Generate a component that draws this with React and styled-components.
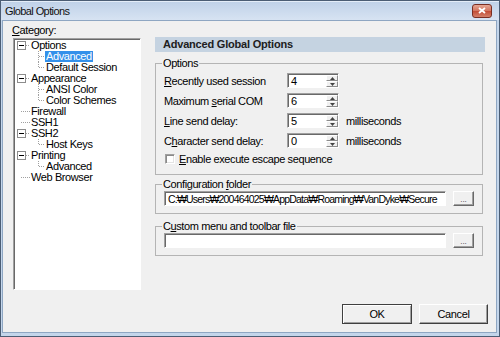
import React from "react";
import styled, { createGlobalStyle } from "styled-components";

const GlobalStyle = createGlobalStyle`
  html, body {
    margin: 0;
    padding: 0;
    background: #ffffff;
  }
  body {
    font-family: "Liberation Sans", Arial, sans-serif;
  }
`;

const Window = styled.div`
  width: 500px;
  height: 337px;
  box-sizing: border-box;
  border: 1px solid #4b5d74;
  display: flex;
  flex-direction: column;
  background: #c4d6eb;
  font-family: "Liberation Sans", "Noto Sans CJK KR", Arial, sans-serif;
  font-size: 11px;
  letter-spacing: -0.4px;
  color: #000;
`;

const TitleBar = styled.div`
  height: 19px;
  flex: none;
  display: flex;
  align-items: center;
  padding: 0 7px 0 4px;
  background: linear-gradient(#bfd1e8, #d7e3f2);
  box-shadow: inset 0 1px #e4edf8;
`;

const Title = styled.span`
  flex: 1;
  font-size: 11px;
  letter-spacing: -0.6px;
  color: #111;
`;

const CloseButton = styled.div`
  width: 20px;
  height: 14px;
  box-sizing: border-box;
  border: 1px solid #7a2e22;
  border-radius: 3px;
  background: linear-gradient(#e7a693, #d27560 48%, #c24c35 52%, #d4806a);
  display: flex;
  align-items: center;
  justify-content: center;
`;

const Frame = styled.div`
  flex: 1;
  display: flex;
  padding: 0 3px 3px 1px;
  min-height: 0;
`;

const Client = styled.div`
  flex: 1;
  display: flex;
  flex-direction: column;
  background: #f0f0f0;
  border: 1px solid #8ea6c2;
  padding: 4px 8px 8px 9px;
  min-height: 0;
`;

const Body = styled.div`
  flex: 1;
  display: flex;
  gap: 14px;
  min-height: 0;
`;

const LeftCol = styled.div`
  width: 129px;
  flex: none;
  display: flex;
  flex-direction: column;
`;

const Caption = styled.div`
  line-height: 11px;
  height: 11px;
`;

const Key = styled.span`
  text-decoration: underline;
`;

const Tree = styled.div`
  margin: 2px 0 0 1px;
  width: 128px;
  height: 252px;
  box-sizing: border-box;
  background: #fff;
  border: 1px solid;
  border-color: #a0a0a0 #ffffff #ffffff #a0a0a0;
  box-shadow: inset 1px 1px #696969;
  padding: 1px 0 0 2px;
`;

const TreeRow = styled.div`
  height: 11px;
  display: flex;
  align-items: center;
  padding-left: ${(p) => (p.$child ? 21 : 1)}px;
`;

const TreeLabel = styled.span`
  line-height: 11px;
  padding: 0 1px;
  white-space: nowrap;
  background: ${(p) => (p.$selected ? "#3390ea" : "transparent")};
  color: ${(p) => (p.$selected ? "#fff" : "#000")};
`;

const RightCol = styled.div`
  flex: 1;
  display: flex;
  flex-direction: column;
  margin: 12px 3px 0 0;
`;

const PanelHeader = styled.div`
  height: 15px;
  line-height: 15px;
  background: #c5d3e1;
  font-weight: bold;
  letter-spacing: -0.2px;
  padding-left: 8px;
  color: #202020;
`;

const Group = styled.fieldset`
  margin: ${(p) => p.$top}px 2px 0 0;
  padding: ${(p) => p.$pad};
  border: 1px solid #b4b4b4;
  min-width: 0;
`;

const Legend = styled.legend`
  padding: 0 1px;
  margin-left: -2px;
  line-height: 13px;
`;

const FormGrid = styled.div`
  display: grid;
  grid-template-columns: 123px 52px auto;
  grid-auto-rows: 15px;
  row-gap: 5px;
  align-items: center;
`;

const Unit = styled.span`
  padding-left: 7px;
`;

const CheckRow = styled.label`
  grid-column: 1 / -1;
  height: 12px;
  display: flex;
  align-items: center;
  gap: 4px;
  padding-left: 1px;
  margin-top: -3px;
`;

const CheckBox = styled.span`
  width: 10px;
  height: 10px;
  box-sizing: border-box;
  background: #fff;
  border: 1px solid;
  border-color: #a0a0a0 #ffffff #ffffff #a0a0a0;
  box-shadow: inset 1px 1px #8a8a8a, inset -1px -1px #e3e3e3;
`;

const Spin = styled.div`
  height: 15px;
  box-sizing: border-box;
  display: flex;
  background: #fff;
  border: 1px solid;
  border-color: #a0a0a0 #ffffff #ffffff #a0a0a0;
  box-shadow: inset 1px 1px #696969;
`;

const SpinValue = styled.span`
  flex: 1;
  padding: 1px 0 0 3px;
  line-height: 12px;
`;

const SpinButtons = styled.div`
  width: 12px;
  display: flex;
  flex-direction: column;
  padding: 1px 0 0 0;
`;

const SpinButton = styled.span`
  flex: 1;
  display: flex;
  align-items: center;
  justify-content: center;
  background: #f0f0f0;
  border: 1px solid;
  border-color: #ffffff #8c8c8c #8c8c8c #ffffff;
`;

const FieldRow = styled.div`
  display: flex;
  align-items: center;
  gap: 7px;
`;

const TextField = styled.div`
  width: 282px;
  height: 15px;
  box-sizing: border-box;
  background: #fff;
  border: 1px solid;
  border-color: #a0a0a0 #ffffff #ffffff #a0a0a0;
  box-shadow: inset 1px 1px #696969;
  padding: 1px 0 0 3px;
  font-size: 10.5px;
  line-height: 12px;
  letter-spacing: -0.8px;
  white-space: nowrap;
  overflow: hidden;
`;

const SmallButton = styled.div`
  width: 21px;
  height: 15px;
  box-sizing: border-box;
  background: #f0f0f0;
  border: 1px solid;
  border-color: #ffffff #696969 #696969 #ffffff;
  box-shadow: inset -1px -1px #a0a0a0;
  font-size: 8px;
  letter-spacing: 0;
  display: flex;
  align-items: flex-end;
  justify-content: center;
  line-height: 10px;
  color: #333;
`;

const Footer = styled.div`
  flex: none;
  height: 20px;
  display: flex;
  justify-content: flex-end;
  gap: 7px;
`;

const PushButton = styled.div`
  width: ${(p) => p.$w}px;
  height: 20px;
  box-sizing: border-box;
  background: #f0f0f0;
  border: 1px solid;
  border-color: ${(p) =>
    p.$default ? "#404040" : "#ffffff #404040 #404040 #ffffff"};
  box-shadow: ${(p) =>
    p.$default
      ? "inset 1px 1px #fff, inset -1px -1px #a0a0a0"
      : "inset -1px -1px #a0a0a0"};
  display: flex;
  align-items: center;
  justify-content: center;
`;

const tree = [
  { label: "Options", kids: ["Advanced", "Default Session"] },
  { label: "Appearance", kids: ["ANSI Color", "Color Schemes"] },
  { label: "Firewall" },
  { label: "SSH1" },
  { label: "SSH2", kids: ["Host Keys"] },
  { label: "Printing", kids: ["Advanced"] },
  { label: "Web Browser" },
];

function RootTwig({ expander }) {
  return (
    <svg width="13" height="11" shapeRendering="crispEdges">
      {expander ? (
        <>
          <rect x="0.5" y="1.5" width="8" height="8" fill="#fff" stroke="#8c8c8c" />
          <line x1="2" y1="5.5" x2="7" y2="5.5" stroke="#000" />
          <line x1="9" y1="5.5" x2="13" y2="5.5" stroke="#a0a0a0" strokeDasharray="1 1" />
        </>
      ) : (
        <line x1="4" y1="5.5" x2="13" y2="5.5" stroke="#a0a0a0" strokeDasharray="1 1" />
      )}
    </svg>
  );
}

function ChildTwig({ last }) {
  return (
    <svg width="8" height="11" shapeRendering="crispEdges">
      <line x1="1.5" y1="0" x2="1.5" y2={last ? 6 : 11} stroke="#a0a0a0" strokeDasharray="1 1" />
      <line x1="2" y1="5.5" x2="8" y2="5.5" stroke="#a0a0a0" strokeDasharray="1 1" />
    </svg>
  );
}

function Arrow({ up }) {
  return (
    <svg width="5" height="3">
      <path d={up ? "M0 3 L2.5 0 L5 3 Z" : "M0 0 L2.5 3 L5 0 Z"} fill="#444" />
    </svg>
  );
}

function SpinBox({ value }) {
  return (
    <Spin>
      <SpinValue>{value}</SpinValue>
      <SpinButtons>
        <SpinButton>
          <Arrow up />
        </SpinButton>
        <SpinButton>
          <Arrow />
        </SpinButton>
      </SpinButtons>
    </Spin>
  );
}

function CategoryTree() {
  return (
    <Tree>
      {tree.map((node, i) => (
        <React.Fragment key={node.label}>
          <TreeRow>
            <RootTwig expander={!!node.kids} />
            <TreeLabel>{node.label}</TreeLabel>
          </TreeRow>
          {(node.kids || []).map((kid, k) => (
            <TreeRow $child key={kid}>
              <ChildTwig last={k === node.kids.length - 1} />
              <TreeLabel $selected={i === 0 && k === 0}>{kid}</TreeLabel>
            </TreeRow>
          ))}
        </React.Fragment>
      ))}
    </Tree>
  );
}

export default function App() {
  return (
    <>
      <GlobalStyle />
      <Window>
        <TitleBar>
          <Title>Global Options</Title>
          <CloseButton>
            <svg width="8" height="7">
              <path d="M1 1 L7 6 M7 1 L1 6" stroke="#fff" strokeWidth="1.8" />
            </svg>
          </CloseButton>
        </TitleBar>
        <Frame>
          <Client>
            <Body>
              <LeftCol>
                <Caption>
                  <Key>C</Key>ategory:
                </Caption>
                <CategoryTree />
              </LeftCol>
              <RightCol>
                <PanelHeader>Advanced Global Options</PanelHeader>
                <Group $top={5} $pad="3px 8px 6px">
                  <Legend>Options</Legend>
                  <FormGrid>
                    <span>
                      <Key>R</Key>ecently used session
                    </span>
                    <SpinBox value="4" />
                    <span />
                    <span>
                      Maximum <Key>s</Key>erial COM
                    </span>
                    <SpinBox value="6" />
                    <span />
                    <span>
                      <Key>L</Key>ine send delay:
                    </span>
                    <SpinBox value="5" />
                    <Unit>milliseconds</Unit>
                    <span>
                      C<Key>h</Key>aracter send delay:
                    </span>
                    <SpinBox value="0" />
                    <Unit>milliseconds</Unit>
                    <CheckRow>
                      <CheckBox />
                      <span>
                        <Key>E</Key>nable execute escape sequence
                      </span>
                    </CheckRow>
                  </FormGrid>
                </Group>
                <Group $top={3} $pad="0 8px 7px">
                  <Legend>
                    Configuration <Key>f</Key>older
                  </Legend>
                  <FieldRow>
                    <TextField>
                      C:₩Users₩200464025₩AppData₩Roaming₩VanDyke₩Secure
                    </TextField>
                    <SmallButton>...</SmallButton>
                  </FieldRow>
                </Group>
                <Group $top={6} $pad="0 8px 7px">
                  <Legend>
                    C<Key>u</Key>stom menu and toolbar file
                  </Legend>
                  <FieldRow>
                    <TextField />
                    <SmallButton>...</SmallButton>
                  </FieldRow>
                </Group>
              </RightCol>
            </Body>
            <Footer>
              <PushButton $default $w={70}>
                OK
              </PushButton>
              <PushButton $w={69}>Cancel</PushButton>
            </Footer>
          </Client>
        </Frame>
      </Window>
    </>
  );
}
